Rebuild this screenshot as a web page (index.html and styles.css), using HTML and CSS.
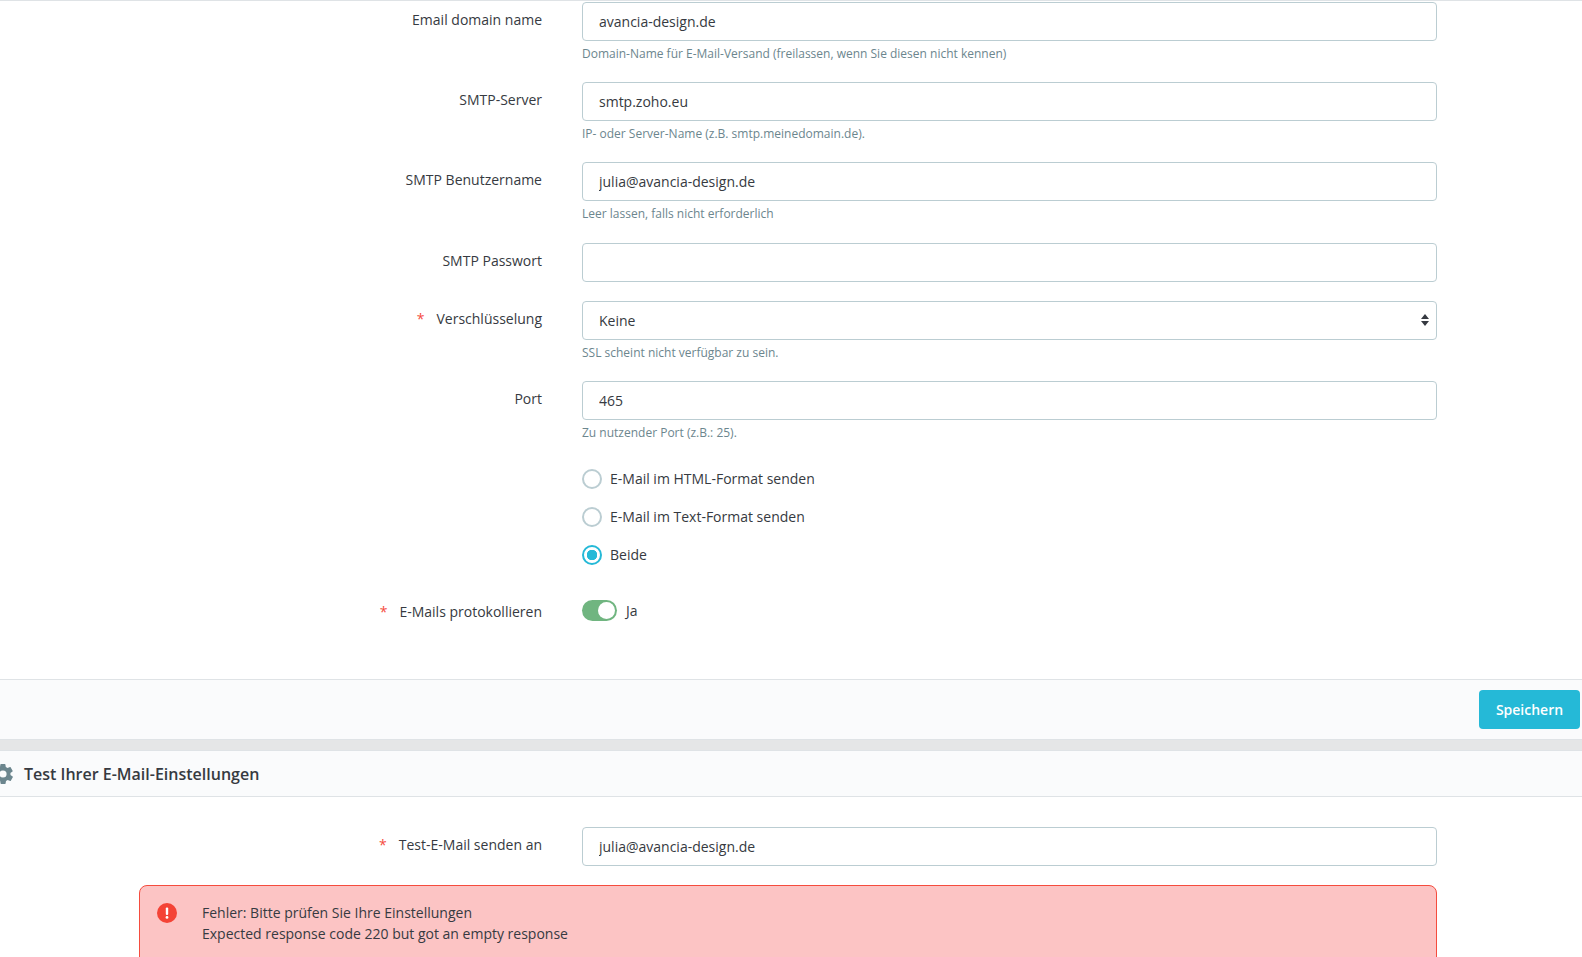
FILE: index.html
```html
<!DOCTYPE html>
<html lang="de">
<head>
    <meta charset="UTF-8">
    <meta name="viewport" content="width=device-width, initial-scale=1.0">
    <title>E-Mail-Einstellungen</title>
    <link rel="stylesheet" href="styles.css">
</head>
<body>
    <form class="form-body">
        <div class="row">
            <label class="row-label">Email domain name</label>
            <div class="row-field">
                <input class="text-input" type="text" value="avancia-design.de">
                <p class="hint">Domain-Name für E-Mail-Versand (freilassen, wenn Sie diesen nicht kennen)</p>
            </div>
        </div>
        <div class="row">
            <label class="row-label">SMTP-Server</label>
            <div class="row-field">
                <input class="text-input" type="text" value="smtp.zoho.eu">
                <p class="hint">IP- oder Server-Name (z.B. smtp.meinedomain.de).</p>
            </div>
        </div>
        <div class="row">
            <label class="row-label">SMTP Benutzername</label>
            <div class="row-field">
                <input class="text-input" type="text" value="julia@avancia-design.de">
                <p class="hint">Leer lassen, falls nicht erforderlich</p>
            </div>
        </div>
        <div class="row row-plain">
            <label class="row-label">SMTP Passwort</label>
            <div class="row-field">
                <input class="text-input" type="password">
            </div>
        </div>
        <div class="row">
            <label class="row-label"><span class="star">*</span>Verschlüsselung</label>
            <div class="row-field">
                <div class="select-wrap">
                    <select class="text-input select-input">
                        <option>Keine</option>
                    </select>
                    <svg class="select-arrow" width="8" height="12" viewBox="0 0 8 12">
                        <path d="M4 0 L8 5 L0 5 Z M0 7 L8 7 L4 12 Z" fill="#363a41"/>
                    </svg>
                </div>
                <p class="hint">SSL scheint nicht verfügbar zu sein.</p>
            </div>
        </div>
        <div class="row">
            <label class="row-label">Port</label>
            <div class="row-field">
                <input class="text-input" type="text" value="465">
                <p class="hint">Zu nutzender Port (z.B.: 25).</p>
            </div>
        </div>
        <div class="row row-radios">
            <div class="row-label"></div>
            <div class="row-field radio-list">
                <label class="radio-item"><input type="radio" name="format">E-Mail im HTML-Format senden</label>
                <label class="radio-item"><input type="radio" name="format">E-Mail im Text-Format senden</label>
                <label class="radio-item"><input type="radio" name="format" checked>Beide</label>
            </div>
        </div>
        <div class="row row-toggle">
            <label class="row-label"><span class="star">*</span>E-Mails protokollieren</label>
            <div class="row-field toggle-field">
                <span class="toggle"></span>
                <span>Ja</span>
            </div>
        </div>
    </form>

    <div class="card-footer">
        <button class="btn-save" type="button">Speichern</button>
    </div>
    <div class="card-gap"></div>

    <div class="card-header">
        <svg class="gear" width="24" height="24" viewBox="0 0 24 24">
            <path fill="#6c868e" fill-rule="evenodd" d="M19.4 13c.1-.3.1-.7.1-1s0-.7-.1-1l2.1-1.6c.2-.2.3-.4.1-.6l-2-3.5c-.1-.2-.4-.3-.6-.2l-2.5 1c-.5-.4-1.1-.7-1.7-1l-.4-2.6c0-.3-.2-.5-.5-.5h-4c-.3 0-.5.2-.5.4l-.4 2.7c-.6.2-1.2.6-1.7 1l-2.5-1c-.2-.1-.5 0-.6.2l-2 3.5c-.1.2-.1.5.1.6L4.6 11c-.1.3-.1.7-.1 1s0 .7.1 1l-2.1 1.6c-.2.2-.3.4-.1.6l2 3.5c.1.2.4.3.6.2l2.5-1c.5.4 1.1.7 1.7 1l.4 2.6c0 .3.2.5.5.5h4c.3 0 .5-.2.5-.4l.4-2.7c.6-.2 1.2-.6 1.7-1l2.5 1c.2.1.5 0 .6-.2l2-3.5c.1-.2.1-.5-.1-.6L19.4 13zM12 15.6a3.6 3.6 0 1 1 0-7.2 3.6 3.6 0 0 1 0 7.2z"/>
        </svg>
        <h2 class="card-title">Test Ihrer E-Mail-Einstellungen</h2>
    </div>

    <div class="test-body">
        <div class="row row-plain">
            <label class="row-label"><span class="star">*</span>Test-E-Mail senden an</label>
            <div class="row-field">
                <input class="text-input" type="text" value="julia@avancia-design.de">
            </div>
        </div>
        <div class="alert">
            <svg class="alert-icon" width="20" height="20" viewBox="0 0 20 20">
                <circle cx="10" cy="10" r="10" fill="#f44336"/>
                <rect x="8.8" y="4.5" width="2.4" height="7.5" rx="1" fill="#fff"/>
                <circle cx="10" cy="14.4" r="1.4" fill="#fff"/>
            </svg>
            <div class="alert-text">
                <p>Fehler: Bitte prüfen Sie Ihre Einstellungen</p>
                <p>Expected response code 220 but got an empty response</p>
            </div>
        </div>
    </div>
</body>
</html>
```

FILE: styles.css
```css
html, body {
    height: 957px;
    overflow: hidden;
}
body {
    margin: 0;
    font-family: "Open Sans", sans-serif;
    font-size: 14px;
    line-height: 21px;
    color: #363a41;
    background: #fff;
}
p {
    margin: 0;
}
.form-body {
    height: 679px;
    padding-top: 2px;
    box-sizing: border-box;
    border-top: 1px solid #dfe3e6;
}
.row {
    display: grid;
    grid-template-columns: 542px 855px;
    column-gap: 40px;
    height: 80.2px;
}
.row:first-child {
    margin-top: -1px;
}
.row-plain {
    height: 58px;
}
.row-radios {
    height: 138px;
}
.row-label {
    display: block;
    text-align: right;
    padding-top: 7px;
}
.star {
    color: #f54c3e;
    margin-right: 12px;
}
.text-input {
    display: block;
    width: 100%;
    height: 39px;
    box-sizing: border-box;
    padding: 0 16px;
    border: 1px solid #bbcdd2;
    border-radius: 4px;
    background: #fff;
    font: inherit;
    color: inherit;
}
.hint {
    margin-top: 4px;
    font-size: 12px;
    line-height: 18px;
    color: #6c868e;
}
.select-wrap {
    position: relative;
}
.select-input {
    appearance: none;
}
.select-arrow {
    position: absolute;
    right: 8px;
    top: 13px;
    pointer-events: none;
}
.radio-list {
    display: flex;
    flex-direction: column;
    margin-top: -1px;
}
.radio-item {
    display: flex;
    align-items: center;
    gap: 8px;
    height: 38px;
}
.radio-item input {
    appearance: none;
    width: 20px;
    height: 20px;
    margin: 0;
    border: 2px solid #bbcdd2;
    border-radius: 50%;
    background: #fff;
}
.radio-item input:checked {
    border-color: #25b9d7;
    background: radial-gradient(circle, #25b9d7 0 5px, #fff 5.5px);
}
.toggle-field {
    display: flex;
    align-items: center;
    gap: 9px;
    height: 21px;
    margin-top: 1px;
}
.toggle {
    display: flex;
    justify-content: flex-end;
    align-items: center;
    width: 35px;
    height: 21px;
    box-sizing: border-box;
    padding: 0 2px;
    border-radius: 11px;
    background: #70b580;
}
.toggle::after {
    content: "";
    width: 17px;
    height: 17px;
    border-radius: 50%;
    background: #fff;
}
.row-toggle .row-label {
    padding-top: 2px;
}
.card-footer {
    display: flex;
    justify-content: flex-end;
    align-items: center;
    height: 60px;
    box-sizing: border-box;
    padding-right: 2px;
    border-top: 1px solid #dfe3e6;
    background: #fafbfc;
}
.btn-save {
    width: 101px;
    height: 39px;
    border: none;
    border-radius: 4px;
    background: #25b9d7;
    color: #fff;
    font: inherit;
    font-weight: 600;
}
.card-gap {
    height: 11px;
    background: #e5e6e7;
    border-top: 1px solid #dfe3e6;
    box-sizing: border-box;
}
.card-header {
    display: flex;
    align-items: center;
    gap: 9px;
    height: 47px;
    box-sizing: border-box;
    border-top: 1px solid #dfe3e6;
    border-bottom: 1px solid #dfe3e6;
    background: #fafbfc;
}
.gear {
    margin-left: -9px;
}
.card-title {
    margin: 0;
    font-size: 16px;
    line-height: 22px;
    font-weight: 600;
}
.test-body {
    height: 160px;
    box-sizing: border-box;
    overflow: hidden;
    padding-top: 31px;
}
.alert {
    display: flex;
    gap: 25px;
    width: 1298px;
    height: 120px;
    box-sizing: border-box;
    margin-left: 139px;
    padding: 17px;
    border: 1px solid #f54c3e;
    border-radius: 8px;
    background: #fcc4c4;
}
.alert-icon {
    flex-shrink: 0;
}
.alert-text {
    margin-top: -1px;
}
```
